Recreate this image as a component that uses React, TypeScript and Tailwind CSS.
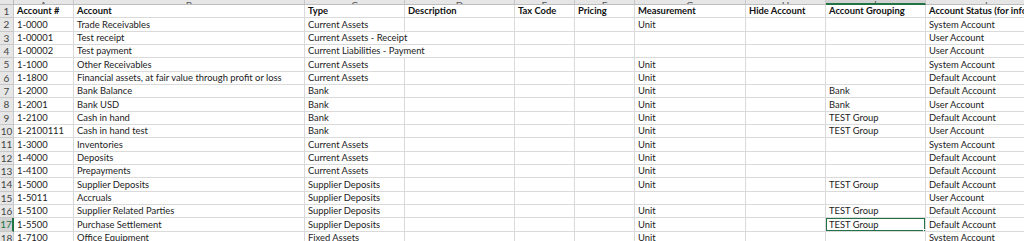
import React from "react";

// column widths for A..J (px), row header is 14px
const COLS = [60, 231, 100, 110, 60, 60, 111, 80, 100, 120];
const LETTERS = ["A", "B", "C", "D", "E", "F", "G", "H", "I", "J"];

const HEADERS = [
  "Account #",
  "Account",
  "Type",
  "Description",
  "Tax Code",
  "Pricing",
  "Measurement",
  "Hide Account",
  "Account Grouping",
  "Account Status (for information only)",
];

// [code, account, type, measurement, grouping, status]
const ROWS: string[][] = [
  ["1-0000", "Trade Receivables", "Current Assets", "Unit", "", "System Account"],
  ["1-00001", "Test receipt", "Current Assets - Receipt", "", "", "User Account"],
  ["1-00002", "Test payment", "Current Liabilities - Payment", "", "", "User Account"],
  ["1-1000", "Other Receivables", "Current Assets", "Unit", "", "System Account"],
  ["1-1800", "Financial assets, at fair value through profit or loss", "Current Assets", "Unit", "", "Default Account"],
  ["1-2000", "Bank Balance", "Bank", "Unit", "Bank", "Default Account"],
  ["1-2001", "Bank USD", "Bank", "Unit", "Bank", "User Account"],
  ["1-2100", "Cash in hand", "Bank", "Unit", "TEST Group", "Default Account"],
  ["1-2100111", "Cash in hand test", "Bank", "Unit", "TEST Group", "User Account"],
  ["1-3000", "Inventories", "Current Assets", "Unit", "", "System Account"],
  ["1-4000", "Deposits", "Current Assets", "Unit", "", "Default Account"],
  ["1-4100", "Prepayments", "Current Assets", "Unit", "", "Default Account"],
  ["1-5000", "Supplier Deposits", "Supplier Deposits", "Unit", "TEST Group", "Default Account"],
  ["1-5011", "Accruals", "Supplier Deposits", "", "", "User Account"],
  ["1-5100", "Supplier Related Parties", "Supplier Deposits", "Unit", "TEST Group", "Default Account"],
  ["1-5500", "Purchase Settlement", "Supplier Deposits", "Unit", "TEST Group", "Default Account"],
  ["1-7100", "Office Equipment", "Fixed Assets", "Unit", "", "System Account"],
];

const SELECTED_ROW = 17;

function Cell({
  width,
  children,
  bold,
  spill,
  selected,
}: {
  width: number;
  children?: React.ReactNode;
  bold?: boolean;
  spill?: boolean;
  selected?: boolean;
}) {
  return (
    <div
      className={`relative flex h-full shrink-0 items-center whitespace-nowrap border-b border-[#dadada] pl-[3px] ${
        spill ? "z-10 overflow-visible" : "border-r overflow-hidden"
      } ${bold ? "font-bold text-[#111]" : "text-[#1c1c1c]"}`}
      style={{ width }}
    >
      {children}
      {selected && (
        <>
          <div className="pointer-events-none absolute -left-[1px] -top-[1px] bottom-[-1px] right-[-1px] border-2 border-[#217346]" />
          <div className="pointer-events-none absolute -bottom-[3px] -right-[3px] h-[5px] w-[5px] border border-white bg-[#217346]" />
        </>
      )}
    </div>
  );
}

function RowHead({ n }: { n: number }) {
  const active = n === SELECTED_ROW;
  return (
    <div
      className={`flex h-full w-[14px] shrink-0 items-center justify-center border-b text-[10px] ${
        active
          ? "border-r-2 border-b-[#c8c8c8] border-r-[#217346] bg-[#d2d2d2] text-[#217346]"
          : "border-r border-[#c8c8c8] bg-[#e6e6e6] text-[#444]"
      }`}
    >
      {n}
    </div>
  );
}

export default function App() {
  return (
    <div
      className="h-[241px] w-[1024px] overflow-hidden bg-white text-[9.4px] leading-none"
      style={{ fontFamily: "Lato, 'Liberation Sans', sans-serif" }}
    >
      {/* column letters strip, mostly scrolled off */}
      <div className="flex h-[5px] overflow-hidden">
        <div className="w-[14px] shrink-0 border-b border-r border-[#bdbdbd] bg-[#e6e6e6]" />
        {LETTERS.map((l, i) => (
          <div
            key={l}
            className={`flex h-full shrink-0 items-end justify-center overflow-hidden border-r border-[#c8c8c8] text-[10px] text-[#555] ${
              i === 8
                ? "border-b-2 border-b-[#217346] bg-[#d2d2d2]"
                : "border-b border-b-[#bdbdbd] bg-[#e6e6e6]"
            }`}
            style={{ width: COLS[i] }}
          >
            <span className="-mb-[6px] leading-[10px]">{l}</span>
          </div>
        ))}
      </div>

      {/* header row */}
      <div className="flex h-[13.333px]">
        <RowHead n={1} />
        {HEADERS.map((h, i) => (
          <Cell key={h} width={COLS[i]} bold>
            {h}
          </Cell>
        ))}
      </div>

      {ROWS.map((r, idx) => {
        const n = idx + 2;
        const [code, account, type, unit, group, status] = r;
        return (
          <div key={code} className="flex h-[13.333px]">
            <RowHead n={n} />
            <Cell width={COLS[0]}>{code}</Cell>
            <Cell width={COLS[1]}>{account}</Cell>
            <Cell width={COLS[2]} spill={type.length > 20}>
              {type}
            </Cell>
            <Cell width={COLS[3]} />
            <Cell width={COLS[4]} />
            <Cell width={COLS[5]} />
            <Cell width={COLS[6]}>{unit}</Cell>
            <Cell width={COLS[7]} />
            <Cell width={COLS[8]} selected={n === SELECTED_ROW}>
              {group}
            </Cell>
            <Cell width={COLS[9]}>{status}</Cell>
          </div>
        );
      })}
    </div>
  );
}
